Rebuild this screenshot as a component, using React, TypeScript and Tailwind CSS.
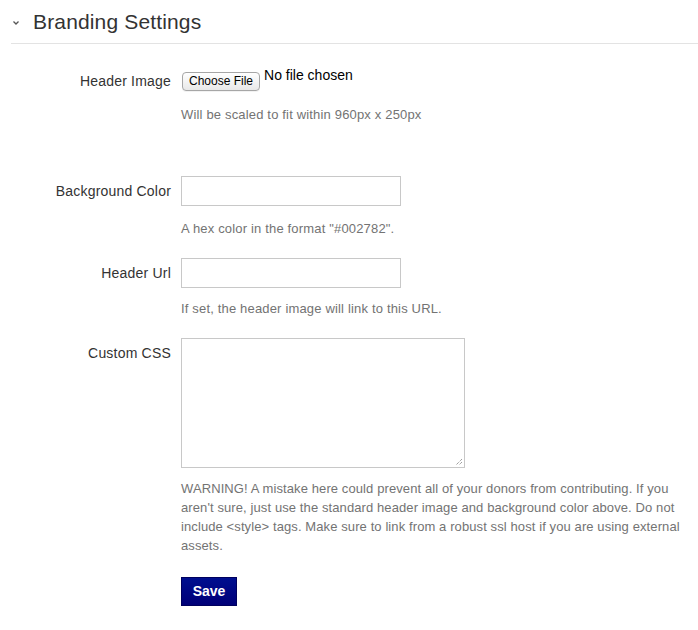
import React from "react";

export default function App() {
  return (
    <div
      className="w-[698px] h-[630px] bg-white text-[#333] overflow-hidden"
      style={{ fontFamily: '"Liberation Sans", Arial, Helvetica, sans-serif' }}
    >
      {/* Header */}
      <div className="ml-[11px] h-[44px] border-b border-[#e3e3e3] flex items-center">
        <svg width="8" height="6" viewBox="0 0 8 6" className="ml-[1px] mt-[3px]">
          <path d="M1.5 1.5 L4 4 L6.5 1.5" fill="none" stroke="#555" strokeWidth="1.3" />
        </svg>
        <h2 className="ml-[13px] text-[21px] leading-[24px] text-[#333] pt-[1px] tracking-[0.15px]">Branding Settings</h2>
      </div>

      {/* Header Image */}
      <div className="flex mt-[23px]">
        <div className="w-[171px] shrink-0 text-right text-[14px] leading-[20px] pt-[4px] tracking-[0.2px]">Header Image</div>
        <div className="ml-[10px] flex-1">
          <div className="flex items-start h-[24px]">
            <div className="mt-[5px] ml-[1px] h-[19px] px-[6px] rounded-[4px] border border-[#a6a6a6] bg-gradient-to-b from-white to-[#e8e8e8] text-[12px] leading-[17px] text-black shadow-[0_1px_0_rgba(0,0,0,0.05)]">
              Choose File
            </div>
            <div className="ml-[4px] text-[14px] leading-[16px] text-black">No file chosen</div>
          </div>
          <div className="mt-[14px] text-[13px] leading-[19px] text-[#737373] tracking-[0.17px]">
            Will be scaled to fit within 960px x 250px
          </div>
        </div>
      </div>

      {/* Background Color */}
      <div className="flex mt-[52px]">
        <div className="w-[171px] shrink-0 text-right text-[14px] leading-[20px] pt-[5px] tracking-[0.2px]">Background Color</div>
        <div className="ml-[10px] flex-1">
          <div className="w-[220px] h-[30px] border border-[#c8c8c8] bg-white"></div>
          <div className="mt-[13px] text-[13px] leading-[19px] text-[#737373] tracking-[0.17px]">
            A hex color in the format "#002782".
          </div>
        </div>
      </div>

      {/* Header Url */}
      <div className="flex mt-[20px]">
        <div className="w-[171px] shrink-0 text-right text-[14px] leading-[20px] pt-[5px] tracking-[0.2px]">Header Url</div>
        <div className="ml-[10px] flex-1">
          <div className="w-[220px] h-[30px] border border-[#c8c8c8] bg-white"></div>
          <div className="mt-[11px] text-[13px] leading-[19px] text-[#737373] tracking-[0.17px]">
            If set, the header image will link to this URL.
          </div>
        </div>
      </div>

      {/* Custom CSS */}
      <div className="flex mt-[20px]">
        <div className="w-[171px] shrink-0 text-right text-[14px] leading-[20px] pt-[5px] tracking-[0.2px]">Custom CSS</div>
        <div className="ml-[10px] flex-1 pr-[10px]">
          <div className="relative w-[284px] h-[130px] border border-[#c8c8c8] bg-white">
            <svg width="8" height="8" viewBox="0 0 8 8" className="absolute right-[1px] bottom-[1px]">
              <path d="M7 1 L1 7 M7 4 L4 7" stroke="#777" strokeWidth="1" strokeDasharray="1 1" />
            </svg>
          </div>
          <div className="mt-[11px] text-[13px] leading-[19px] text-[#737373] tracking-[0.1px]">
            WARNING! A mistake here could prevent all of your donors from contributing. If you aren't sure, just use the
            standard header image and background color above. Do not include &lt;style&gt; tags. Make sure to link from a
            robust ssl host if you are using external assets.
          </div>
          <div className="mt-[22px] w-[56px] h-[29px] bg-gradient-to-b from-[#000f8f] to-[#000078] border border-[#00005e] text-white font-bold text-[14px] leading-[27px] text-center">
            Save
          </div>
        </div>
      </div>
    </div>
  );
}
